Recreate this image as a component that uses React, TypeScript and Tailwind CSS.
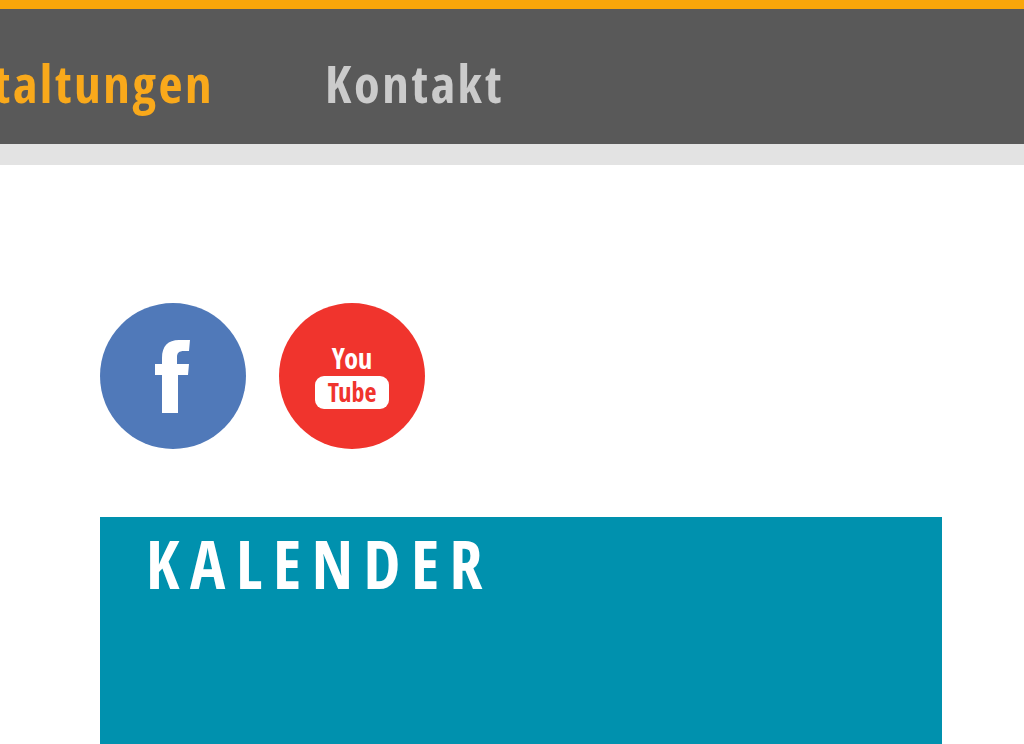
export default function App() {
  return (
    <div className="flex h-screen flex-col overflow-hidden bg-white font-['Open_Sans_Condensed','Open_Sans',sans-serif]">
      <header className="border-t-9 border-b-21 border-t-[#f9a60a] border-b-[#e3e3e3] bg-[#595959]">
        <nav className="flex h-[135px] items-center pt-3 text-[52px] font-bold tracking-wider">
          <a href="#veranstaltungen" className="flex w-[214px] shrink-0 justify-end text-[#f9a91b]">taltungen</a>
          <a href="#kontakt" className="ml-[111px] text-[#cbcbcb]">Kontakt</a>
        </nav>
      </header>
      <main className="flex grow flex-col pt-[138px] pr-[82px] pl-[100px]">
        <div className="flex gap-8">
          <a href="#facebook" aria-label="Facebook">
            <svg className="block size-[147px]" viewBox="0 0 147 147">
              <circle cx="73" cy="73" r="73" fill="#5079b9" />
              <path fill="#fff" d="M62 110V72h-7V61h7v-6c0-12 6-18 17-18h11l-1 11h-5c-5 0-7 2-7 6v7h12l-1 11H78v38z" />
            </svg>
          </a>
          <a href="#youtube" aria-label="YouTube">
            <svg className="block size-[147px]" viewBox="0 0 147 147">
              <circle cx="73" cy="73" r="73" fill="#f0342d" />
              <rect x="36" y="73" width="74" height="33" rx="9" fill="#fff" />
              <text x="73" y="66" textAnchor="middle" fill="#fff" className="text-[28px]">You</text>
              <text x="73" y="99" textAnchor="middle" fill="#f0342d" className="text-[26px]">Tube</text>
            </svg>
          </a>
        </div>
        <section className="mt-[67px] grow bg-[#0091ae] px-[46px] pt-1.5">
          <h2 className="text-[66px] leading-20 font-bold tracking-[0.16em] text-white">KALENDER</h2>
        </section>
      </main>
    </div>
  );
}
